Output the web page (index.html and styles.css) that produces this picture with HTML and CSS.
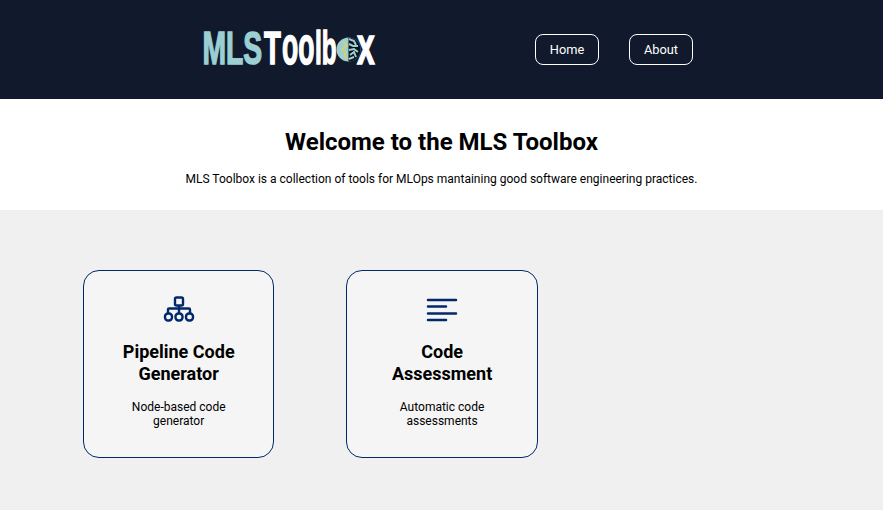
FILE: index.html
```html
<!DOCTYPE html>
<html lang="en">
<head>
<meta charset="utf-8">
<title>MLS Toolbox</title>
<link rel="stylesheet" href="styles.css">
</head>
<body>
<header class="site-header">
  <a class="logo" href="#" aria-label="MLS Toolbox">
    <svg class="logo-svg" width="176" height="67" viewBox="0 -2 176 67">
      <text class="logo-mls" transform="translate(.5 45.500) scale(.615 1)">MLS</text>
      <text class="logo-tool" transform="translate(62 45.500) scale(.6 1)">T</text>
      <text class="logo-tool logo-low" transform="translate(80 45.500) scale(.5 1)">oo</text>
      <text class="logo-tool" transform="translate(113 45.500) scale(.53 1)">lb</text>
      <g transform="translate(2 12)">
        <circle cx="144.500" cy="19.500" r="12" fill="#9ccfd3"/>
        <path d="M144.500 7.500a12 12 0 0 1 0 24z" fill="#0b0f18"/>
        <path d="M139 11l3 5-4 3 4 3-2 4 4 3M144 15l-2 1" fill="none" stroke="#e3d34a" stroke-width="1.300"/>
        <path d="M145 9l5 2 2 4M145 14l4 2 5 0M145 20l5-1 4 3M146 25l4-3 2 5M145 29l5-2" fill="none" stroke="#9ccfd3" stroke-width="2"/>
      </g>
      <text class="logo-tool logo-low" transform="translate(155 45.500) scale(.6 1)">x</text>
    </svg>
  </a>
  <nav class="nav">
    <a class="nav-btn" href="#">Home</a>
    <a class="nav-btn" href="#">About</a>
  </nav>
</header>
<section class="intro">
  <h1 class="intro-title">Welcome to the MLS Toolbox</h1>
  <p class="intro-text">MLS Toolbox is a collection of tools for MLOps mantaining good software engineering practices.</p>
</section>
<main class="tools">
  <article class="card">
    <svg class="card-icon" width="32" height="26" viewBox="0 0 32 26" fill="none" stroke="#00296b" stroke-width="2.400">
      <rect x="12" y="1.500" width="8" height="8" rx="1.500"/>
      <path d="M16 9.500v8M5 17v-3.500a1 1 0 0 1 1-1h20a1 1 0 0 1 1 1V17"/>
      <rect x="2" y="17.500" width="7" height="7" rx="3"/>
      <rect x="12.500" y="17.500" width="7" height="7" rx="3"/>
      <rect x="23" y="17.500" width="7" height="7" rx="3"/>
    </svg>
    <h2 class="card-title">Pipeline Code Generator</h2>
    <p class="card-text">Node-based code generator</p>
  </article>
  <article class="card">
    <svg class="card-icon" width="32" height="26" viewBox="0 0 32 26" fill="none" stroke="#00296b" stroke-width="2.500" stroke-linecap="round">
      <path d="M2 4h28M2 10.500h18M2 17.500h28M2 24h18"/>
    </svg>
    <h2 class="card-title">Code Assessment</h2>
    <p class="card-text">Automatic code assessments</p>
  </article>
</main>
</body>
</html>
```
FILE: styles.css
```css
* { box-sizing: border-box; }
html, body { height: 100%; }
body {
  margin: 0;
  display: flex;
  flex-direction: column;
  font-family: Roboto, "Liberation Sans", sans-serif;
  color: #000;
  background: #f0f0f0;
}
.site-header {
  height: 99px;
  flex: none;
  background: #111a2c;
  display: flex;
  align-items: center;
  padding-left: 202px;
}
.logo { display: block; height: 67px; }
.logo-svg { display: block; }
.logo-mls, .logo-tool {
  font-family: "Liberation Sans", sans-serif;
  font-weight: 700;
  font-size: 46px;
  stroke-width: 1.500px;
}
.logo-mls { fill: #9ccfd3; stroke: #9ccfd3; }
.logo-tool { fill: #fff; stroke: #fff; }
.logo-low { font-size: 53px; }
.nav { display: flex; gap: 30px; margin-left: 157px; }
.nav-btn {
  width: 64px;
  height: 31px;
  display: flex;
  align-items: center;
  justify-content: center;
  border: 1px solid #fff;
  border-radius: 8px;
  color: #fff;
  font-size: 12.800px;
  text-decoration: none;
}
.intro {
  height: 111px;
  flex: none;
  background: #fff;
  text-align: center;
  padding-top: 28px;
}
.intro-title {
  margin: 0;
  font-size: 24px;
  line-height: 30px;
  font-weight: 700;
}
.intro-text {
  margin: 15px 0 0;
  font-size: 12px;
  line-height: 15px;
}
.tools {
  flex: 1;
  display: flex;
  align-items: flex-start;
  gap: 72px;
  padding: 60px 0 0 83px;
}
.card {
  width: 191.400px;
  height: 188px;
  background: #f5f5f5;
  border: 1px solid #00296b;
  border-radius: 16px;
  padding: 25px 24px 0;
  text-align: center;
}
.card-icon { display: block; margin: 0 auto; }
.card-title {
  margin: 19px 0 0;
  font-size: 18px;
  line-height: 22px;
  font-weight: 700;
}
.card-text {
  margin: 15px 0 0;
  font-size: 12px;
  line-height: 14px;
}
```
